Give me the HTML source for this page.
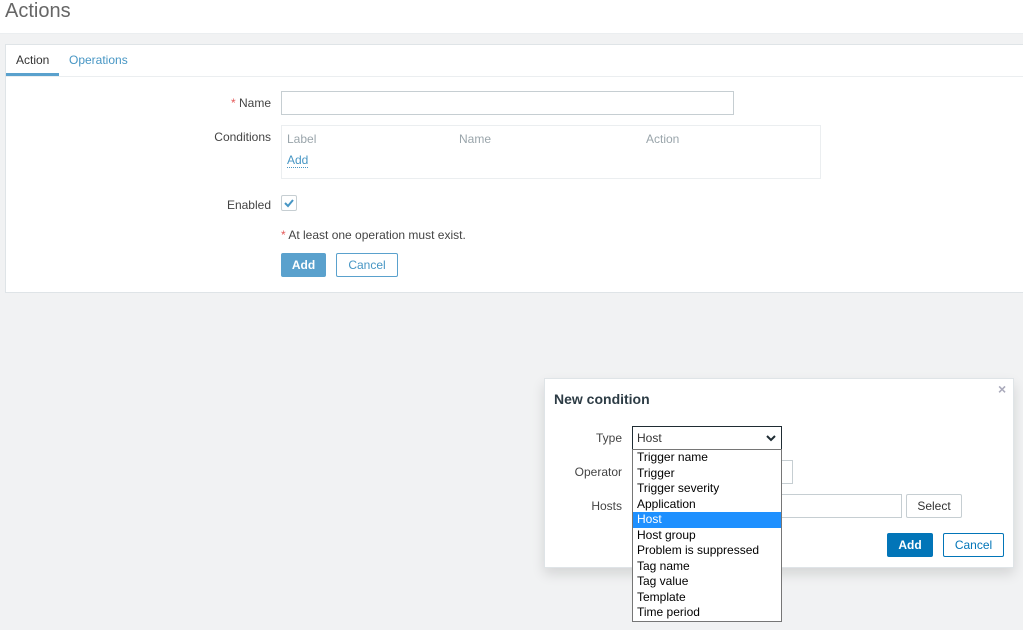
<!DOCTYPE html>
<html><head><style>
*{box-sizing:border-box;margin:0;padding:0}
body{width:1023px;height:630px;background:#f1f2f3;font-family:"Liberation Sans",Arial,sans-serif;font-size:12px;color:#333;position:relative;overflow:hidden}
.hdr{position:absolute;left:0;top:0;width:1023px;height:34px;background:#fff;border-bottom:1px solid #ebeef0}
.hdr h1{position:absolute;left:5px;top:0;font-size:20px;font-weight:normal;color:#666}
.panel{position:absolute;left:5px;top:44px;width:1020px;height:249px;background:#fff;border:1px solid #dfe4e7}
.tabs{height:32px;border-bottom:1px solid #ebeef0;position:relative}
.tab{position:absolute;top:8px;font-size:12px}
.a{position:absolute}
.lbl{position:absolute;text-align:right;width:120px;color:#444}
.btn{position:absolute;height:24px;border-radius:2px;font-size:12px;text-align:center;line-height:22px}
.dd div{height:15.5px;line-height:15px;padding-left:4px;font-size:12px;color:#000}
</style></head><body>
<div class="hdr"><h1>Actions</h1></div>
<div class="panel">
 <div class="tabs">
  <span class="tab" style="left:10px;color:#333">Action</span>
  <span class="tab" style="left:63px;color:#4796c4">Operations</span>
  <div class="a" style="left:0;top:28px;width:53px;height:3px;background:#5aa1cd"></div>
 </div>
</div>
<div class="lbl" style="left:151px;top:96px"><span style="color:#e45959">*</span> Name</div>
<div class="a" style="left:281px;top:91px;width:453px;height:24px;border:1px solid #c6ced2"></div>
<div class="lbl" style="left:151px;top:130px">Conditions</div>
<div class="a" style="left:281px;top:125px;width:540px;height:54px;border:1px solid #ebeef0"></div>
<div class="a" style="left:287px;top:132px;color:#9aa5ab">Label</div>
<div class="a" style="left:459px;top:132px;color:#9aa5ab">Name</div>
<div class="a" style="left:646px;top:132px;color:#9aa5ab">Action</div>
<div class="a" style="left:287px;top:153px;color:#4796c4;border-bottom:1px dotted #4796c4;line-height:14px">Add</div>
<div class="lbl" style="left:151px;top:198px">Enabled</div>
<div class="a" style="left:281px;top:195px;width:16px;height:16px;border:1px solid #c6ced2;border-radius:2px"><svg width="14" height="14" viewBox="0 0 14 14"><path d="M3 7l3 3 5-6" stroke="#4796c4" stroke-width="2" fill="none"/></svg></div>
<div class="a" style="left:281px;top:228px;color:#444"><span style="color:#e45959">*</span> At least one operation must exist.</div>
<div class="btn" style="left:281px;top:253px;width:45px;background:#5aa1cd;color:#fff;font-weight:bold;border:1px solid #5aa1cd">Add</div>
<div class="btn" style="left:336px;top:253px;width:62px;background:#fff;color:#4796c4;border:1px solid #5aa1cd">Cancel</div>

<div class="a" style="left:544px;top:378px;width:470px;height:190px;background:#fff;border:1px solid #dfe4e7;box-shadow:0 6px 12px rgba(0,0,0,.12)"></div>
<div class="a" style="left:554px;top:391px;font-size:14px;font-weight:bold;color:#2d3c45">New condition</div>
<div class="a" style="left:998px;top:381px;color:#aab;font-size:14px;font-weight:bold">×</div>
<div class="lbl" style="left:502px;top:431px">Type</div>
<div class="lbl" style="left:502px;top:465px">Operator</div>
<div class="lbl" style="left:502px;top:499px">Hosts</div>
<div class="a" style="left:780px;top:460px;width:13px;height:24px;border:1px solid #c6ced2;border-left:none"></div>
<div class="a" style="left:780px;top:494px;width:122px;height:24px;border:1px solid #c6ced2;border-left:none"></div>
<div class="btn" style="left:906px;top:494px;width:56px;border:1px solid #c6ced2;background:#fff;color:#333">Select</div>
<div class="btn" style="left:887px;top:533px;width:46px;background:#0275b8;color:#fff;font-weight:bold;border:1px solid #0275b8">Add</div>
<div class="btn" style="left:943px;top:533px;width:61px;background:#fff;color:#0275b8;border:1px solid #0275b8">Cancel</div>
<div class="a" style="left:632px;top:426px;width:150px;height:24px;border:1px solid #1f2c33;background:#fff;padding:4px 0 0 4px">Host
 <svg style="position:absolute;right:5px;top:8px" width="10" height="7" viewBox="0 0 10 7"><path d="M1 1l4 4 4-4" stroke="#1f2c33" stroke-width="2" fill="none"/></svg></div>
<div class="a dd" style="left:632px;top:449px;width:150px;height:173px;border:1px solid #767676;background:#fff;padding-top:0">
<div>Trigger name</div><div>Trigger</div><div>Trigger severity</div><div>Application</div>
<div style="background:#1e90ff;color:#fff">Host</div><div>Host group</div><div>Problem is suppressed</div>
<div>Tag name</div><div>Tag value</div><div>Template</div><div>Time period</div>
</div>
</body></html>
